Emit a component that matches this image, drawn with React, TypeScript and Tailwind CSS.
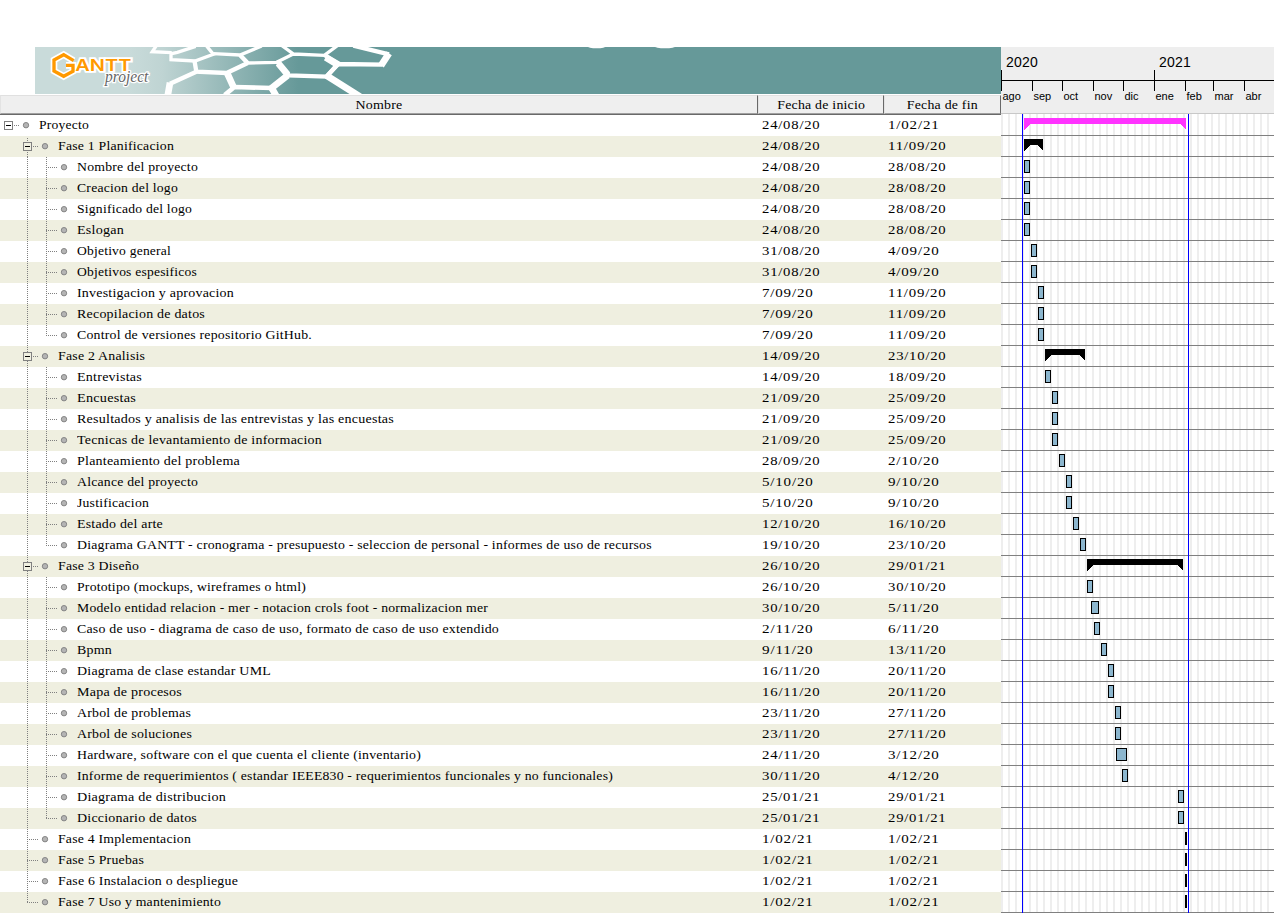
import React from "react";

type Kind = "project" | "phase" | "task";

interface Row {
  name: string;
  level: 0 | 1 | 2;
  kind: Kind;
  start: string;
  end: string;
  width: number;
  last?: boolean;
}

const project = (name: string, start: string, end: string, width: number): Row => ({ name, level: 0, kind: "project", start, end, width });
const phase = (name: string, start: string, end: string, width: number): Row => ({ name, level: 1, kind: "phase", start, end, width });
const task = (name: string, start: string, end: string, width: number, last = false): Row => ({ name, level: 2, kind: "task", start, end, width, last });
const single = (name: string, width: number, last = false): Row => ({ name, level: 1, kind: "task", start: "1/02/21", end: "1/02/21", width, last });

const rows: Row[] = [
  project("Proyecto", "24/08/20", "1/02/21", 50),
  phase("Fase 1 Planificacion", "24/08/20", "11/09/20", 116),
  task("Nombre del proyecto", "24/08/20", "28/08/20", 121),
  task("Creacion del logo", "24/08/20", "28/08/20", 101),
  task("Significado del logo", "24/08/20", "28/08/20", 115),
  task("Eslogan", "24/08/20", "28/08/20", 47),
  task("Objetivo general", "31/08/20", "4/09/20", 94),
  task("Objetivos espesificos", "31/08/20", "4/09/20", 120),
  task("Investigacion y aprovacion", "7/09/20", "11/09/20", 157),
  task("Recopilacion de datos", "7/09/20", "11/09/20", 128),
  task("Control de versiones repositorio GitHub.", "7/09/20", "11/09/20", 235, true),
  phase("Fase 2 Analisis", "14/09/20", "23/10/20", 88),
  task("Entrevistas", "14/09/20", "18/09/20", 65),
  task("Encuestas", "21/09/20", "25/09/20", 59),
  task("Resultados y analisis de las entrevistas y las encuestas", "21/09/20", "25/09/20", 317),
  task("Tecnicas de levantamiento de informacion", "21/09/20", "25/09/20", 245),
  task("Planteamiento del problema", "28/09/20", "2/10/20", 163),
  task("Alcance del proyecto", "5/10/20", "9/10/20", 121),
  task("Justificacion", "5/10/20", "9/10/20", 72),
  task("Estado del arte", "12/10/20", "16/10/20", 86),
  task("Diagrama GANTT - cronograma - presupuesto - seleccion de personal - informes de uso de recursos", "19/10/20", "23/10/20", 575, true),
  phase("Fase 3 Diseño", "26/10/20", "29/01/21", 81),
  task("Prototipo (mockups, wireframes o html)", "26/10/20", "30/10/20", 229),
  task("Modelo entidad relacion - mer - notacion crols foot - normalizacion mer", "30/10/20", "5/11/20", 411),
  task("Caso de uso - diagrama de caso de uso, formato de caso de uso extendido", "2/11/20", "6/11/20", 422),
  task("Bpmn", "9/11/20", "13/11/20", 35),
  task("Diagrama de clase estandar UML", "16/11/20", "20/11/20", 194),
  task("Mapa de procesos", "16/11/20", "20/11/20", 105),
  task("Arbol de problemas", "23/11/20", "27/11/20", 114),
  task("Arbol de soluciones", "23/11/20", "27/11/20", 115),
  task("Hardware, software con el que cuenta el cliente (inventario)", "24/11/20", "3/12/20", 344),
  task("Informe de requerimientos ( estandar IEEE830 - requerimientos funcionales y no funcionales)", "30/11/20", "4/12/20", 536),
  task("Diagrama de distribucion", "25/01/21", "29/01/21", 149),
  task("Diccionario de datos", "25/01/21", "29/01/21", 120, true),
  single("Fase 4 Implementacion", 133),
  single("Fase 5 Pruebas", 86),
  single("Fase 6 Instalacion o despliegue", 180),
  single("Fase 7 Uso y mantenimiento", 163, true),
];

const measurer = document.createElement("canvas").getContext("2d");

/* Horizontal stretch that makes a label fill the given width. */
function stretch(text: string, width: number, tracking: number) {
  if (!measurer) return 1;
  measurer.font = '13px "Liberation Serif"';
  return width / (measurer.measureText(text).width + tracking * text.length);
}

function Label({ text, width }: { text: string; width: number }) {
  return (
    <span className="inline-block origin-left tracking-[0.2px]" style={{ transform: `scaleX(${stretch(text, width, 0.2)})` }}>
      {text}
    </span>
  );
}

function DateLabel({ text }: { text: string }) {
  const width = text.length === 8 ? 58.5 : 51.5;
  return (
    <span className="inline-block origin-left tracking-[0.7px]" style={{ transform: `scaleX(${stretch(text, width, 0.7)})` }}>
      {text}
    </span>
  );
}

/* Days since the first of August 2020; the chart has one pixel for each day. */
function day(date: string) {
  const [d, m, y] = date.split("/").map(Number);
  return Math.round((Date.UTC(2000 + y, m - 1, d) - Date.UTC(2020, 7, 1)) / 86400000);
}

const months = [
  { label: "ago", w: "w-[31px]" },
  { label: "sep", w: "w-[30px]" },
  { label: "oct", w: "w-[31px]" },
  { label: "nov", w: "w-[30px]" },
  { label: "dic", w: "w-[31px]" },
  { label: "ene", w: "w-[31px]" },
  { label: "feb", w: "w-[28px]" },
  { label: "mar", w: "w-[31px]" },
  { label: "abr", w: "w-[30px]" },
];

function Banner() {
  return (
    <svg className="ml-[35px] block h-[47px] w-[966px]" viewBox="0 0 2898 141">
      <defs>
        <linearGradient id="teal" gradientUnits="userSpaceOnUse" x1="280" x2="790" y1="0" y2="0">
          <stop offset="0" stopColor="#c9dbda" />
          <stop offset="0.2" stopColor="#bfd4d3" />
          <stop offset="1" stopColor="#669999" />
        </linearGradient>
      </defs>
      <rect width="2898" height="141" fill="url(#teal)" />
      <g transform="translate(330 -9)" fill="none" stroke="#fff" strokeLinejoin="miter">
        <g strokeWidth="10">
          <path d="M34 5 22 23 80 26M78 26V47L150 51 205 31 184 5M80 29 97 25 152 7" />
          <path d="M205 29 285 33 350 6M285 33 308 57M395 55 445 30 411 5M445 30 538 34 577 5M308 57 395 55" />
        </g>
        <g strokeWidth="13">
          <path d="M148 48 154 83 245 87 308 57M395 52 432 94 545 98 580 58 538 33M580 60 712 62" />
          <path d="M154 83 75 119M545 97 580 60M285 33 308 57" />
          <path d="M732 31 625 5" />
        </g>
        <g strokeWidth="20">
          <path d="M245 84 266 130M75 116 68 156M400 58 428 92M542 40 574 60M545 95 645 158M428 94 380 132 394 156M708 65 732 28" />
        </g>
        <path strokeWidth="14" d="M239 153 268 129 380 132" />
      </g>
      <g fill="#fff">
        <ellipse cx="1685" cy="-2" rx="28" ry="5.5" />
        <ellipse cx="1890" cy="-2" rx="32" ry="5.5" />
      </g>
      <g transform="translate(-15 -21)" strokeLinejoin="miter">
        <path d="M131 62 101 44 72 60V93L101 109 129 94V76H108" fill="none" stroke="#fff" strokeWidth="20" />
        <text
          x="136"
          y="94"
          textLength="168"
          lengthAdjust="spacingAndGlyphs"
          fontSize="48"
          fill="#ff9900"
          stroke="#fff"
          strokeWidth="10"
          className="font-['Inter'] font-semibold [paint-order:stroke]"
        >
          ANTT
        </text>
        <path d="M131 62 101 44 72 60V93L101 109 129 94V76H108" fill="none" stroke="#ff9900" strokeWidth="10" />
        <text
          x="225"
          y="126"
          textLength="130"
          lengthAdjust="spacingAndGlyphs"
          fontSize="49"
          fill="#666"
          stroke="#fff"
          strokeWidth="8"
          className="font-['Liberation_Serif'] italic [paint-order:stroke]"
        >
          project
        </text>
      </g>
    </svg>
  );
}

function HeaderCell({ label, size, text }: { label: string; size: string; text: number }) {
  return (
    <div className={`${size} flex h-[19px] items-center justify-center border-t border-r border-b border-l border-t-[#e0e0e0] border-r-[#696969] border-b-[#a0a0a0] border-l-[#e3e3e3] bg-[#efefef] pb-px text-[13px] leading-none`}>
      <span className="inline-block origin-center tracking-[0.2px]" style={{ transform: `scaleX(${stretch(label, text, 0.2)})` }}>
        {label}
      </span>
    </div>
  );
}

/* Dotted guides, the expander and the bullet that precede a task name. */
function TreeGlyph({ row, index }: { row: Row; index: number }) {
  const x = 7 + row.level * 19;
  const expandable = row.kind !== "task";
  const parity = index % 2;
  const lastOuter = index === rows.length - 1;
  const width = 39 + row.level * 19;
  return (
    <svg width={width} height="21" viewBox={`0 0 ${width} 21`} className="block shrink-0" shapeRendering="crispEdges">
      <g stroke="#808080" strokeDasharray="1 1" fill="none">
        {row.level > 0 && <path d={`M27.5 ${index === 1 ? 1 : 0}V${lastOuter ? 11 : 21}`} strokeDashoffset={parity} />}
        {row.level === 2 && <path d={`M46.5 0V${row.last ? 11 : 21}`} strokeDashoffset={parity} />}
        {expandable ? <path d={`M${x + 7} 10.5h6`} /> : <path d={`M${x + 1} 10.5h11`} />}
      </g>
      {expandable && (
        <g>
          <rect x={x - 2.5} y="6.5" width="8" height="8" fill={parity ? "#efefe0" : "#fff"} stroke="#808080" />
          <path d={`M${x - 1} 10.5h5`} stroke="#000" />
        </g>
      )}
      <circle cx={26 + row.level * 19} cy="10.2" r="2.7" fill="#b4b4b4" stroke="#868686" strokeWidth="1" shapeRendering="auto" />
    </svg>
  );
}

function Bar({ row }: { row: Row }) {
  const left = day(row.start);
  const days = day(row.end) - left + 1;
  if (row.kind === "task") {
    return <div className="mt-[3px] h-[13px] border border-black bg-[#8cb6ce]" style={{ marginLeft: left, width: days + 1 }} />;
  }
  return (
    <svg className="mt-[3px] block h-3" width={days} style={{ marginLeft: left }} shapeRendering="crispEdges">
      <path d={`M0 0H${days}V12L${days - 6} 6H6L0 12Z`} fill={row.kind === "project" ? "#ff33ff" : "#000"} />
    </svg>
  );
}

function Timeline() {
  return (
    <div className="w-[273px] shrink-0 overflow-hidden">
      <div className="h-[67px] border-b border-[#c8c8c8] bg-[#eee] font-['Liberation_Sans',sans-serif] text-black">
        <div className="flex h-[23px] items-end pb-px text-[14px] leading-none tracking-[0.25px]">
          <span className="w-[153px] pl-[5px]">2020</span>
          <span className="pl-[5px]">2021</span>
        </div>
        <div className="flex h-[10px]">
          <div className="w-[153px] border-l border-black" />
          <div className="w-[120px] border-l border-black" />
        </div>
        <div className="h-px bg-black" />
        <div className="flex">
          {months.map((m) => (
            <div key={m.label} className={`${m.w} shrink-0 text-[11px] leading-none`}>
              <div className="h-[10px] w-px bg-black" />
              <div className="pl-[1.5px]">{m.label}</div>
            </div>
          ))}
        </div>
      </div>
      <div className="relative bg-[repeating-linear-gradient(90deg,#eeeeee_0px,#eeeeee_2px,#ffffff_2px,#ffffff_7px)] pt-px">
        {rows.map((row, i) => (
          <div key={i} className="flex h-[21px] items-start border-b border-[#808080]">
            <Bar row={row} />
          </div>
        ))}
        <div className="absolute inset-y-0 left-[21px] w-px bg-[#0000ff]" />
        <div className="absolute inset-y-0 left-[187px] w-px bg-[#0000ff]" />
      </div>
    </div>
  );
}

export default function App() {
  return (
    <main className="h-[913px] w-[1274px] overflow-hidden bg-white pt-[47px] font-['Liberation_Serif',serif] text-black">
      <div className="flex">
        <section className="w-[1001px] shrink-0">
          <Banner />
          <div className="flex border-b border-[#696969] bg-white pt-px">
            <HeaderCell label="Nombre" size="w-[758px]" text={47} />
            <HeaderCell label="Fecha de inicio" size="w-[126px]" text={88} />
            <HeaderCell label="Fecha de fin" size="w-[117px]" text={71} />
          </div>
          {rows.map((row, i) => (
            <div key={i} className={`flex h-[21px] items-start text-[13px] leading-[20px] whitespace-nowrap ${i % 2 ? "bg-[#efefe0]" : "bg-white"}`}>
              <div className="flex w-[762px] shrink-0">
                <TreeGlyph row={row} index={i} />
                <Label text={row.name} width={row.width} />
              </div>
              <div className="w-[126px] shrink-0">
                <DateLabel text={row.start} />
              </div>
              <DateLabel text={row.end} />
            </div>
          ))}
        </section>
        <Timeline />
      </div>
    </main>
  );
}
